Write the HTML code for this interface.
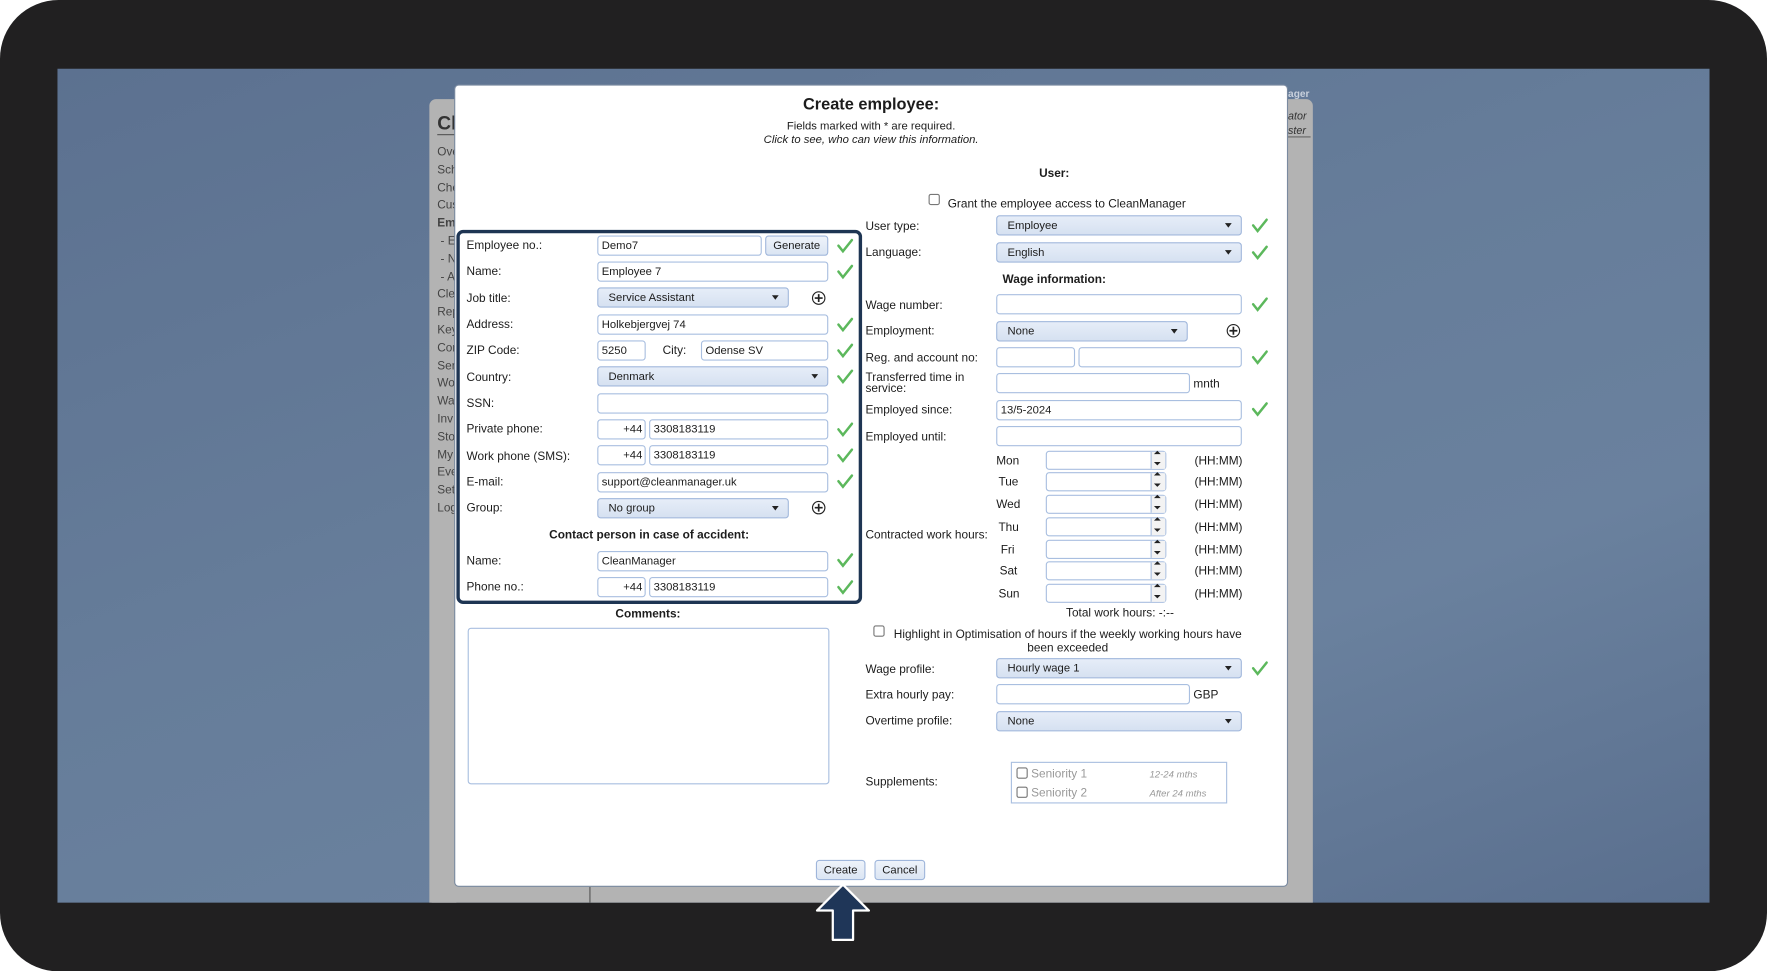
<!DOCTYPE html>
<html><head><meta charset="utf-8"><style>
*{box-sizing:border-box;margin:0;padding:0}
html,body{width:1767px;height:971px;overflow:hidden;background:#fff}
#w{position:absolute;left:0;top:0;width:1568px;height:862px;transform:scale(1.12691);transform-origin:0 0;font-family:"Liberation Sans",sans-serif;font-size:10.5px;color:#1c1c1c}
.a{position:absolute}
.frame{left:0;top:0;width:1568px;height:862px;background:#212021;border-radius:52px}
.screen{left:51px;top:61px;width:1466px;height:740px;background:linear-gradient(160deg,#5c7190 0%,#667d9a 45%,#6a819e 70%,#5a6f8e 100%)}
.grey{left:381px;top:88px;width:784px;height:713px;background:#b3b3b3;border-radius:6px 6px 0 0}
.modal{left:403px;top:75px;width:740px;height:712px;background:#fff;border:1px solid #7a8aa0;border-radius:4px}
.l{position:absolute;white-space:nowrap;margin-top:1px}
.in{position:absolute;height:18px;border:1px solid #a9bfe0;border-radius:3px;background:#fff;padding-left:3px;line-height:18px;font-size:10px}
.sel{position:absolute;height:18px;border:1px solid #9fb6db;border-radius:3px;background:linear-gradient(#e6edf8,#d6e1f1);padding-left:9px;line-height:18px;font-size:10px}
.sel:after{content:"";position:absolute;right:8px;top:6px;border-left:3.5px solid transparent;border-right:3.5px solid transparent;border-top:4px solid #222}
.btn{position:absolute;height:18px;border:1px solid #9fb6db;border-radius:3px;background:linear-gradient(#eef3fa,#dbe5f3);text-align:center;line-height:17px;font-size:10px}
.spin{position:absolute;width:107px;height:17px;border:1px solid #a9bfe0;border-radius:3px;background:#fff}
.spin:after{content:"";position:absolute;right:0;top:0;width:12px;height:15px;border-left:1px solid #a9bfe0;background:#f3f3f3}
.cb{position:absolute;width:10px;height:10px;border:1px solid #777;border-radius:2px;background:#fff}
</style></head><body><div id="w">
<div class="a frame"></div>
<div class="a screen"></div>
<div class="a grey"></div>
<div class="a" style="left:383px;top:95px;width:22px;height:706px;background:#b3b3b3"></div>
<div class="l" style="left:388px;top:99px;font-size:17px;font-weight:bold;color:#333">Cl</div>
<div class="a" style="left:388px;top:119px;width:16px;height:1px;background:#555"></div>
<div class="a" style="left:388px;top:128px;line-height:15.8px;font-size:10.5px;color:#444">Ove<br>Sch<br>Che<br>Cus<br><b>Em</b><br>&nbsp;- E<br>&nbsp;- N<br>&nbsp;- A<br>Cle<br>Rep<br>Key<br>Con<br>Ser<br>Wo<br>Wa<br>Inv<br>Sto<br>My<br>Eve<br>Set<br>Log</div>
<div class="l" style="left:1143px;top:77px;font-size:9px;color:#c8d0dc;font-weight:bold">ager</div>
<div class="l" style="left:1143px;top:97px;font-size:9.5px;color:#333;font-style:italic">ator</div>
<div class="l" style="left:1143px;top:110px;font-size:9.5px;color:#333;font-style:italic">ster</div>
<div class="a" style="left:1143px;top:121px;width:20px;height:1px;background:#666"></div>
<div class="a" style="left:523px;top:787px;width:1px;height:14px;background:#555"></div>
<div class="a modal"></div>
<div class="l" style="left:403px;width:740px;text-align:center;top:84px;font-size:14.5px;font-weight:bold">Create employee:</div>
<div class="l" style="left:403px;width:740px;text-align:center;top:106px;font-size:10px">Fields marked with * are required.</div>
<div class="l" style="left:403px;width:740px;text-align:center;top:118px;font-size:10px;font-style:italic">Click to see, who can view this information.</div>

<div class="a" style="left:405px;top:204px;width:360px;height:332px;border:3.5px solid #1e3553;border-radius:6px"></div>

<div class="l" style="left:414px;top:211px">Employee no.:</div>
<div class="in" style="left:530px;top:209px;width:146px">Demo7</div>
<div class="btn" style="left:679px;top:209px;width:56px">Generate</div>
<div class="l" style="left:414px;top:234px">Name:</div>
<div class="in" style="left:530px;top:232px;width:205px">Employee 7</div>
<div class="l" style="left:414px;top:258px">Job title:</div>
<div class="sel" style="left:530px;top:255px;width:170px">Service Assistant</div>
<div class="l" style="left:414px;top:281px">Address:</div>
<div class="in" style="left:530px;top:279px;width:205px">Holkebjergvej 74</div>
<div class="l" style="left:414px;top:304px">ZIP Code:</div>
<div class="in" style="left:530px;top:302px;width:43px">5250</div>
<div class="l" style="left:588px;top:304px">City:</div>
<div class="in" style="left:622px;top:302px;width:113px">Odense SV</div>
<div class="l" style="left:414px;top:328px">Country:</div>
<div class="sel" style="left:530px;top:325px;width:205px">Denmark</div>
<div class="l" style="left:414px;top:351px">SSN:</div>
<div class="in" style="left:530px;top:349px;width:205px"></div>
<div class="l" style="left:414px;top:374px">Private phone:</div>
<div class="in" style="left:530px;top:372px;width:43px;text-align:right;padding-right:2px">+44</div>
<div class="in" style="left:576px;top:372px;width:159px">3308183119</div>
<div class="l" style="left:414px;top:398px">Work phone (SMS):</div>
<div class="in" style="left:530px;top:395px;width:43px;text-align:right;padding-right:2px">+44</div>
<div class="in" style="left:576px;top:395px;width:159px">3308183119</div>
<div class="l" style="left:414px;top:421px">E-mail:</div>
<div class="in" style="left:530px;top:419px;width:205px">support@cleanmanager.uk</div>
<div class="l" style="left:414px;top:444px">Group:</div>
<div class="sel" style="left:530px;top:442px;width:170px">No group</div>
<div class="l" style="left:406px;width:340px;text-align:center;top:468px;font-weight:bold">Contact person in case of accident:</div>
<div class="l" style="left:414px;top:491px">Name:</div>
<div class="in" style="left:530px;top:489px;width:205px">CleanManager</div>
<div class="l" style="left:414px;top:514px">Phone no.:</div>
<div class="in" style="left:530px;top:512px;width:43px;text-align:right;padding-right:2px">+44</div>
<div class="in" style="left:576px;top:512px;width:159px">3308183119</div>

<div class="l" style="left:415px;width:320px;text-align:center;top:538px;font-weight:bold">Comments:</div>
<div class="a" style="left:415px;top:557px;width:321px;height:139px;border:1px solid #a9bfe0;border-radius:3px"></div>

<div class="l" style="left:768px;width:335px;text-align:center;top:147px;font-weight:bold">User:</div>
<div class="cb" style="left:824px;top:172px"></div>
<div class="l" style="left:841px;top:174px">Grant the employee access to CleanManager</div>
<div class="l" style="left:768px;top:194px">User type:</div>
<div class="sel" style="left:884px;top:191px;width:218px">Employee</div>
<div class="l" style="left:768px;top:217px">Language:</div>
<div class="sel" style="left:884px;top:215px;width:218px">English</div>
<div class="l" style="left:768px;width:335px;text-align:center;top:241px;font-weight:bold">Wage information:</div>
<div class="l" style="left:768px;top:264px">Wage number:</div>
<div class="in" style="left:884px;top:261px;width:218px"></div>
<div class="l" style="left:768px;top:287px">Employment:</div>
<div class="sel" style="left:884px;top:285px;width:170px">None</div>
<div class="l" style="left:768px;top:311px">Reg. and account no:</div>
<div class="in" style="left:884px;top:308px;width:70px"></div>
<div class="in" style="left:957px;top:308px;width:145px"></div>
<div class="l" style="left:768px;top:329px;line-height:10px">Transferred time in<br>service:</div>
<div class="in" style="left:884px;top:331px;width:172px"></div>
<div class="l" style="left:1059px;top:334px">mnth</div>
<div class="l" style="left:768px;top:357px">Employed since:</div>
<div class="in" style="left:884px;top:355px;width:218px">13/5-2024</div>
<div class="l" style="left:768px;top:381px">Employed until:</div>
<div class="in" style="left:884px;top:378px;width:218px"></div>
<div class="l" style="left:768px;top:468px">Contracted work hours:</div>
<div class="l" style="left:884px;top:402px">Mon</div><div class="spin" style="left:928px;top:400px"></div><div class="l" style="left:1060px;top:402px">(HH:MM)</div>
<div class="l" style="left:886px;top:421px">Tue</div><div class="spin" style="left:928px;top:419px"></div><div class="l" style="left:1060px;top:421px">(HH:MM)</div>
<div class="l" style="left:884px;top:441px">Wed</div><div class="spin" style="left:928px;top:439px"></div><div class="l" style="left:1060px;top:441px">(HH:MM)</div>
<div class="l" style="left:886px;top:461px">Thu</div><div class="spin" style="left:928px;top:459px"></div><div class="l" style="left:1060px;top:461px">(HH:MM)</div>
<div class="l" style="left:888px;top:481px">Fri</div><div class="spin" style="left:928px;top:479px"></div><div class="l" style="left:1060px;top:481px">(HH:MM)</div>
<div class="l" style="left:887px;top:500px">Sat</div><div class="spin" style="left:928px;top:498px"></div><div class="l" style="left:1060px;top:500px">(HH:MM)</div>
<div class="l" style="left:886px;top:520px">Sun</div><div class="spin" style="left:928px;top:518px"></div><div class="l" style="left:1060px;top:520px">(HH:MM)</div>
<div class="l" style="left:946px;top:537px">Total work hours: -:--</div>
<div class="cb" style="left:775px;top:555px"></div>
<div class="l" style="left:770px;width:335px;text-align:center;top:556px;line-height:12px;padding-left:20px">Highlight in Optimisation of hours if the weekly working hours have<br>been exceeded</div>
<div class="l" style="left:768px;top:587px">Wage profile:</div>
<div class="sel" style="left:884px;top:584px;width:218px">Hourly wage 1</div>
<div class="l" style="left:768px;top:610px">Extra hourly pay:</div>
<div class="in" style="left:884px;top:607px;width:172px"></div>
<div class="l" style="left:1059px;top:610px">GBP</div>
<div class="l" style="left:768px;top:633px">Overtime profile:</div>
<div class="sel" style="left:884px;top:631px;width:218px">None</div>
<div class="l" style="left:768px;top:687px">Supplements:</div>
<div class="a" style="left:897px;top:676px;width:192px;height:37px;border:1px solid #a9bfe0"></div>
<div class="cb" style="left:902px;top:681px"></div>
<div class="l" style="left:915px;top:680px;color:#999">Seniority 1</div>
<div class="l" style="left:1020px;top:681px;color:#999;font-style:italic;font-size:8.5px">12-24 mths</div>
<div class="cb" style="left:902px;top:698px"></div>
<div class="l" style="left:915px;top:697px;color:#999">Seniority 2</div>
<div class="l" style="left:1020px;top:698px;color:#999;font-style:italic;font-size:8.5px">After 24 mths</div>

<div class="btn" style="left:724px;top:763px;width:44px">Create</div>
<div class="btn" style="left:776px;top:763px;width:45px">Cancel</div>

<svg class="a" style="left:0;top:0" width="1568" height="862">
<g fill="none" stroke="#5cb85c" stroke-width="2.2" stroke-linecap="round">
<path d="M744 218l4 5l8-10"/>
<path d="M744 241l4 5l8-10"/><path d="M744 288l4 5l8-10"/><path d="M744 311l4 5l8-10"/><path d="M744 334l4 5l8-10"/>
<path d="M744 381l4 5l8-10"/><path d="M744 404l4 5l8-10"/><path d="M744 427l4 5l8-10"/><path d="M744 497l4 5l8-10"/><path d="M744 521l4 5l8-10"/>
<path d="M1112 200l4 5l8-10"/><path d="M1112 224l4 5l8-10"/><path d="M1112 270l4 5l8-10"/><path d="M1112 317l4 5l8-10"/><path d="M1112 363l4 5l8-10"/><path d="M1112 593l4 5l8-10"/>
</g>
<g fill="none" stroke="#222" stroke-width="1">
<circle cx="726.5" cy="264.5" r="5.5"/><path d="M726.5 261v7M723 264.5h7" stroke-width="1.5"/>
<circle cx="726.5" cy="450.5" r="5.5"/><path d="M726.5 447v7M723 450.5h7" stroke-width="1.5"/>
<circle cx="1094.5" cy="293.5" r="5.5"/><path d="M1094.5 290v7M1091 293.5h7" stroke-width="1.5"/>
</g>
<path d="M748 785L771 808L757 808L757 834L739 834L739 808L725 808Z" fill="#1f3658" stroke="#fff" stroke-width="2" stroke-linejoin="round"/>
<g fill="#222">
<path d="M1024 403l3-3l3 3zM1024 410l3 3l3-3z"/><path d="M1024 422l3-3l3 3zM1024 429l3 3l3-3z"/><path d="M1024 442l3-3l3 3zM1024 449l3 3l3-3z"/><path d="M1024 462l3-3l3 3zM1024 469l3 3l3-3z"/><path d="M1024 482l3-3l3 3zM1024 489l3 3l3-3z"/><path d="M1024 501l3-3l3 3zM1024 508l3 3l3-3z"/><path d="M1024 521l3-3l3 3zM1024 528l3 3l3-3z"/>
</g>
</svg>
</div></body></html>
